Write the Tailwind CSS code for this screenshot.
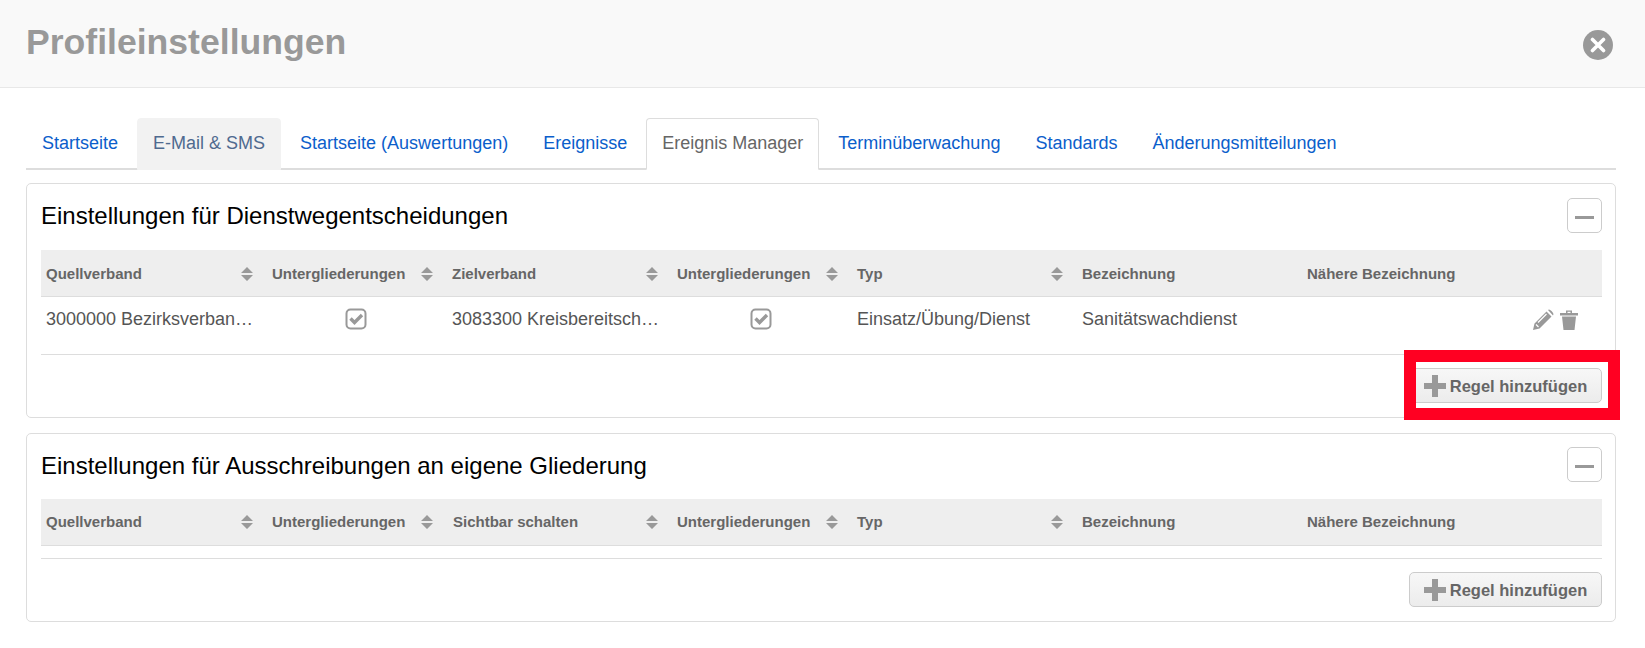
<!DOCTYPE html>
<html lang="de">
<head>
    <meta charset="UTF-8">
    <meta name="viewport" content="width=device-width, initial-scale=1.0">
    <title>Profileinstellungen</title>
    <script src="https://cdn.jsdelivr.net/npm/@tailwindcss/browser@4"></script>
</head>
<body class="relative h-[648px] overflow-hidden bg-white font-['Liberation_Sans',Arial,sans-serif] text-[#555]">
    <header class="flex h-[88px] items-center justify-between border-b border-[#e8e8e8] bg-[#f9f9f9] pl-[26px] pr-[14px]">
        <h1 class="mt-[-1px] text-[35.6px] font-bold text-[#999]">Profileinstellungen</h1>
        <button class="mr-[18px] mt-[2px] flex h-[30px] w-[30px] items-center justify-center rounded-full bg-[#999]">
            <svg viewBox="0 0 16 16" class="h-[16px] w-[16px]"><path d="M2.5 2.5l11 11M13.5 2.5l-11 11" stroke="#fff" stroke-width="3.6" stroke-linecap="round"/></svg>
        </button>
    </header>

    <main class="pl-[26px] pr-[29px] pt-[30px]">
        <ul class="flex h-[52px] border-b-2 border-[#ddd] text-[18px] text-[#0b5ecb]">
            <li class="mr-[3px] mb-[-2px] rounded-t border border-transparent px-[15px] leading-[48px]">Startseite</li>
            <li class="mr-[3px] mb-[-2px] rounded-t border border-[#f2f2f2] bg-[#f2f2f2] px-[15px] leading-[48px] text-[#4f6a8f]">E-Mail &amp; SMS</li>
            <li class="mr-[3px] mb-[-2px] rounded-t border border-transparent px-[15px] leading-[48px]">Startseite (Auswertungen)</li>
            <li class="mr-[3px] mb-[-2px] rounded-t border border-transparent px-[15px] leading-[48px]">Ereignisse</li>
            <li class="mr-[3px] mb-[-2px] rounded-t border border-[#ddd] border-b-white bg-white px-[15px] leading-[48px] text-[#666]">Ereignis Manager</li>
            <li class="mr-[3px] mb-[-2px] rounded-t border border-transparent px-[15px] leading-[48px]">Terminüberwachung</li>
            <li class="mr-[3px] mb-[-2px] rounded-t border border-transparent px-[15px] leading-[48px]">Standards</li>
            <li class="mr-[3px] mb-[-2px] rounded-t border border-transparent px-[15px] leading-[48px]">Änderungsmitteilungen</li>
        </ul>

        <!-- Dienstwegentscheidungen -->
        <section class="mt-[13px] h-[235px] rounded-[5px] border border-[#ddd] pl-[14px] pr-[13px] pt-[14px]">
            <div class="flex h-[52px] items-start justify-between">
                <h2 class="pt-[4px] text-[24px] leading-[28px] text-black">Einstellungen für Dienstwegentscheidungen</h2>
                <button class="flex h-[35px] w-[35px] items-center justify-center rounded-[5px] border border-[#ccc] bg-white pt-[3px]"><span class="h-[3px] w-[19px] bg-[#999]"></span></button>
            </div>
            <table class="w-full table-fixed border-collapse">
                <colgroup><col class="w-[225px]"><col class="w-[180px]"><col class="w-[225px]"><col class="w-[180px]"><col class="w-[225px]"><col class="w-[225px]"><col></colgroup>
                <thead>
                    <tr class="h-[46px] border-b border-[#ddd] bg-[#eee] text-left text-[15px] font-bold text-[#666]">
                        <th class="pl-[5px] pr-[12px] pt-[3px]"><div class="flex items-center justify-between">Quellverband<svg viewBox="0 0 14 16" class="h-[16px] w-[14px]"><path d="M7 1l6 6H1zM7 15l6-6H1z" fill="#999"/></svg></div></th>
                        <th class="pl-[6px] pr-[12px] pt-[3px]"><div class="flex items-center justify-between">Untergliederungen<svg viewBox="0 0 14 16" class="h-[16px] w-[14px]"><path d="M7 1l6 6H1zM7 15l6-6H1z" fill="#999"/></svg></div></th>
                        <th class="pl-[6px] pr-[12px] pt-[3px]"><div class="flex items-center justify-between">Zielverband<svg viewBox="0 0 14 16" class="h-[16px] w-[14px]"><path d="M7 1l6 6H1zM7 15l6-6H1z" fill="#999"/></svg></div></th>
                        <th class="pl-[6px] pr-[12px] pt-[3px]"><div class="flex items-center justify-between">Untergliederungen<svg viewBox="0 0 14 16" class="h-[16px] w-[14px]"><path d="M7 1l6 6H1zM7 15l6-6H1z" fill="#999"/></svg></div></th>
                        <th class="pl-[6px] pr-[12px] pt-[3px]"><div class="flex items-center justify-between">Typ<svg viewBox="0 0 14 16" class="h-[16px] w-[14px]"><path d="M7 1l6 6H1zM7 15l6-6H1z" fill="#999"/></svg></div></th>
                        <th class="px-[6px] pt-[3px]">Bezeichnung</th>
                        <th class="px-[6px] pt-[3px]">Nähere Bezeichnung</th>
                    </tr>
                </thead>
                <tbody>
                    <tr class="h-[58px] border-b border-[#ddd] text-[18px]">
                        <td class="truncate pl-[5px] pr-[6px] pb-[11px]">3000000 Bezirksverban…</td>
                        <td class="px-[6px] pb-[13px]">
                            <svg viewBox="0 0 22 22" class="mx-auto h-[22px] w-[22px]"><rect x="1.5" y="1.5" width="19" height="19" rx="4" fill="#fff" stroke="#999" stroke-width="2"/><path d="M5.500 10.500l4 4L17 7" fill="none" stroke="#999" stroke-width="3.4"/></svg>
                        </td>
                        <td class="truncate px-[6px] pb-[11px]">3083300 Kreisbereitsch…</td>
                        <td class="px-[6px] pb-[13px]">
                            <svg viewBox="0 0 22 22" class="mx-auto h-[22px] w-[22px]"><rect x="1.5" y="1.5" width="19" height="19" rx="4" fill="#fff" stroke="#999" stroke-width="2"/><path d="M5.500 10.500l4 4L17 7" fill="none" stroke="#999" stroke-width="3.4"/></svg>
                        </td>
                        <td class="px-[6px] pb-[11px]">Einsatz/Übung/Dienst</td>
                        <td class="px-[6px] pb-[11px]">Sanitätswachdienst</td>
                        <td class="px-[6px] pb-[11px]">
                            <div class="flex items-center justify-end gap-[5px] pr-[17px]">
                                <svg viewBox="0 0 22 22" class="h-[22px] w-[22px]"><path d="M1 21l1.5-6.5L14.5 2.5l5 5L7.5 19.500zM16 1l1-.5q1 0 2.500 1.500t2 3l-.5 1.500z" fill="#999"/><path d="M4 15.500l2.500 2.500M6 13.500L14.500 5" stroke="#fff" stroke-width="1.200"/></svg>
                                <svg viewBox="0 0 20 22" class="h-[22px] w-[20px]"><path d="M1 4h6V1.500h6V4h6v2.500H1zM8.500 2.800V4h3V2.800zM3 7.500h14L15.500 21h-11z" fill="#999"/></svg>
                            </div>
                        </td>
                    </tr>
                </tbody>
            </table>
            <div class="mt-[13px] flex justify-end">
                <button class="flex h-[35px] w-[193px] items-center justify-center gap-[4px] rounded-[5px] border border-[#ccc] bg-gradient-to-b from-[#f7f7f7] to-[#ececec] pt-[2px] text-[16.5px] font-bold text-[#666]">
                    <svg viewBox="0 0 22 22" class="h-[22px] w-[22px]"><path d="M8 0h6v8h8v6h-8v8H8v-8H0V8h8z" fill="#999"/></svg>Regel hinzufügen
                </button>
            </div>
        </section>

        <!-- Ausschreibungen -->
        <section class="mt-[15px] h-[189px] rounded-[5px] border border-[#ddd] pl-[14px] pr-[13px] pt-[13px]">
            <div class="flex h-[52px] items-start justify-between">
                <h2 class="pt-[5px] text-[24px] leading-[28px] text-black">Einstellungen für Ausschreibungen an eigene Gliederung</h2>
                <button class="flex h-[35px] w-[35px] items-center justify-center rounded-[5px] border border-[#ccc] bg-white pt-[3px]"><span class="h-[3px] w-[19px] bg-[#999]"></span></button>
            </div>
            <table class="w-full table-fixed border-collapse">
                <colgroup><col class="w-[225px]"><col class="w-[180px]"><col class="w-[225px]"><col class="w-[180px]"><col class="w-[225px]"><col class="w-[225px]"><col></colgroup>
                <thead>
                    <tr class="h-[46px] border-b border-[#ddd] bg-[#eee] text-left text-[15px] font-bold text-[#666]">
                        <th class="pl-[5px] pr-[12px]"><div class="flex items-center justify-between">Quellverband<svg viewBox="0 0 14 16" class="h-[16px] w-[14px]"><path d="M7 1l6 6H1zM7 15l6-6H1z" fill="#999"/></svg></div></th>
                        <th class="pl-[6px] pr-[12px]"><div class="flex items-center justify-between">Untergliederungen<svg viewBox="0 0 14 16" class="h-[16px] w-[14px]"><path d="M7 1l6 6H1zM7 15l6-6H1z" fill="#999"/></svg></div></th>
                        <th class="pl-[6px] pr-[12px]"><div class="flex items-center justify-between pl-[1px]">Sichtbar schalten<svg viewBox="0 0 14 16" class="h-[16px] w-[14px]"><path d="M7 1l6 6H1zM7 15l6-6H1z" fill="#999"/></svg></div></th>
                        <th class="pl-[6px] pr-[12px]"><div class="flex items-center justify-between">Untergliederungen<svg viewBox="0 0 14 16" class="h-[16px] w-[14px]"><path d="M7 1l6 6H1zM7 15l6-6H1z" fill="#999"/></svg></div></th>
                        <th class="pl-[6px] pr-[12px]"><div class="flex items-center justify-between">Typ<svg viewBox="0 0 14 16" class="h-[16px] w-[14px]"><path d="M7 1l6 6H1zM7 15l6-6H1z" fill="#999"/></svg></div></th>
                        <th class="px-[6px]">Bezeichnung</th>
                        <th class="px-[6px]">Nähere Bezeichnung</th>
                    </tr>
                </thead>
            </table>
            <div class="mt-[12px] border-t border-[#ddd] pt-[13px]">
                <div class="flex justify-end">
                    <button class="flex h-[35px] w-[193px] items-center justify-center gap-[4px] rounded-[5px] border border-[#ccc] bg-gradient-to-b from-[#f7f7f7] to-[#ececec] pt-[2px] text-[16.5px] font-bold text-[#666]">
                        <svg viewBox="0 0 22 22" class="h-[22px] w-[22px]"><path d="M8 0h6v8h8v6h-8v8H8v-8H0V8h8z" fill="#999"/></svg>Regel hinzufügen
                    </button>
                </div>
            </div>
        </section>
    </main>

    <!-- rote Markierung -->
    <div class="absolute left-[1404px] top-[350px] h-[70px] w-[216px] border-[12px] border-[#ff0022]"></div>
</body>
</html>
